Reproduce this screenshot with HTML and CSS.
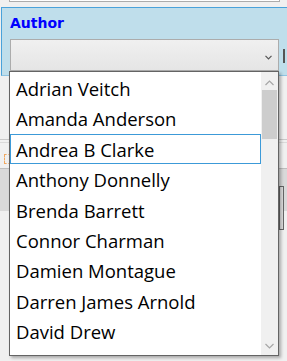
FILE: index.html
```html
<!DOCTYPE html>
<html>
<head>
    <title>Author picker</title>
    <link rel="stylesheet" href="styles.css">
</head>
<body>
    <div class="page">
        <div class="top-field"></div>
        <div class="author-panel">
            <div class="panel-label">Author</div>
            <div class="select-box">
                <svg class="chev" width="7" height="5" viewBox="0 0 7 5"><path d="M0.5 0.8 L3.5 3.8 L6.5 0.8" fill="none" stroke="#555" stroke-width="1.2"/></svg>
            </div>
            <div class="side-tick"></div>
        </div>
        <div class="below">
            <div class="rule"></div>
            <div class="rule second"></div>
            <div class="marker"></div>
            <div class="grey-band"></div>
            <div class="right-box"></div>
        </div>

        <div class="dropdown">
            <ul class="options">
                <li>Adrian Veitch</li>
                <li>Amanda Anderson</li>
                <li class="current">Andrea B Clarke</li>
                <li>Anthony Donnelly</li>
                <li>Brenda Barrett</li>
                <li>Connor Charman</li>
                <li>Damien Montague</li>
                <li>Darren James Arnold</li>
                <li>David Drew</li>
            </ul>
            <div class="scrollbar">
                <svg class="arrow up" width="9" height="6" viewBox="0 0 9 6"><path d="M0.5 5 L4.5 1 L8.5 5" fill="none" stroke="#a6a6a6" stroke-width="1.2"/></svg>
                <div class="thumb"></div>
                <div class="track-rest"></div>
                <svg class="arrow down" width="9" height="6" viewBox="0 0 9 6"><path d="M0.5 1 L4.5 5 L8.5 1" fill="none" stroke="#a6a6a6" stroke-width="1.2"/></svg>
            </div>
        </div>
    </div>
</body>
</html>
```

FILE: styles.css
```css
body {
    margin: 0;
    background-color: #f0f0f0;
    font-family: "Open Sans", sans-serif;
}

.page {
    position: relative;
    width: 287px;
    height: 361px;
    overflow: hidden;
}

.top-field {
    margin-left: 9px;
    width: 269px;
    height: 1px;
    background-color: #fff;
    border: 1px solid #acacac;
    border-top: none;
}

.author-panel {
    position: relative;
    margin-top: 5px;
    margin-left: 1px;
    height: 67px;
    background-color: #bfdeeb;
    border-top: 1px solid #4aa2da;
    border-left: 1px solid #4aa2da;
    border-bottom: 1px solid #8ec4e3;
    padding-left: 8px;
}

.panel-label {
    font-family: "DejaVu Sans", sans-serif;
    font-weight: bold;
    font-size: 14px;
    color: #0000ff;
    padding-top: 7px;
    height: 24px;
}

.select-box {
    width: 267px;
    height: 30px;
    border: 1px solid #acacac;
    background: linear-gradient(#f0f0f0, #e5e5e5);
    display: flex;
    align-items: center;
    justify-content: flex-end;
}

.chev {
    margin-right: 6px;
    margin-top: 4px;
}

.side-tick {
    position: absolute;
    right: 2px;
    top: 41px;
    width: 2px;
    height: 14px;
    background-color: #555;
}

.below {
    position: relative;
    height: 286px;
    padding-top: 63px;
    box-sizing: border-box;
}

.rule {
    height: 1px;
    background-color: #c9c9c9;
}

.rule.second {
    margin-top: 2px;
    background-color: #dadada;
}

.marker {
    margin-top: 11px;
    margin-left: 4px;
    width: 5px;
    height: 8px;
    border: 1px dashed #f0a860;
}

.grey-band {
    margin-top: 4px;
    height: 42px;
    background-color: #d9d9d9;
    border-top: 1px solid #bdbdbd;
}

.right-box {
    position: absolute;
    right: 3px;
    top: 110px;
    width: 3px;
    height: 42px;
    border: 1px solid #666;
    background-color: #ddd;
}

.dropdown {
    position: absolute;
    left: 9px;
    top: 71px;
    width: 268px;
    height: 283px;
    border: 1px solid #646464;
    background-color: #fff;
    box-shadow: 2px 2px 3px rgba(0, 0, 0, 0.3);
    display: flex;
}

.options {
    list-style: none;
    margin: 0;
    padding: 1px 0 0 0;
    flex: 1;
}

.options li {
    height: 30.4px;
    line-height: 29px;
    box-sizing: border-box;
    padding-left: 5px;
    font-size: 18.5px;
    color: #000;
    border: 1px solid transparent;
    white-space: nowrap;
}

.options li.current {
    border-color: #3c9ad8;
}

.scrollbar {
    width: 17px;
    background-color: #f0f0f0;
    display: flex;
    flex-direction: column;
    align-items: center;
}

.arrow.up {
    margin-top: 8px;
    margin-bottom: 4px;
}

.thumb {
    width: 15px;
    height: 49px;
    background-color: #cdcdcd;
}

.track-rest {
    flex: 1;
}

.arrow.down {
    margin-bottom: 6px;
}
```
